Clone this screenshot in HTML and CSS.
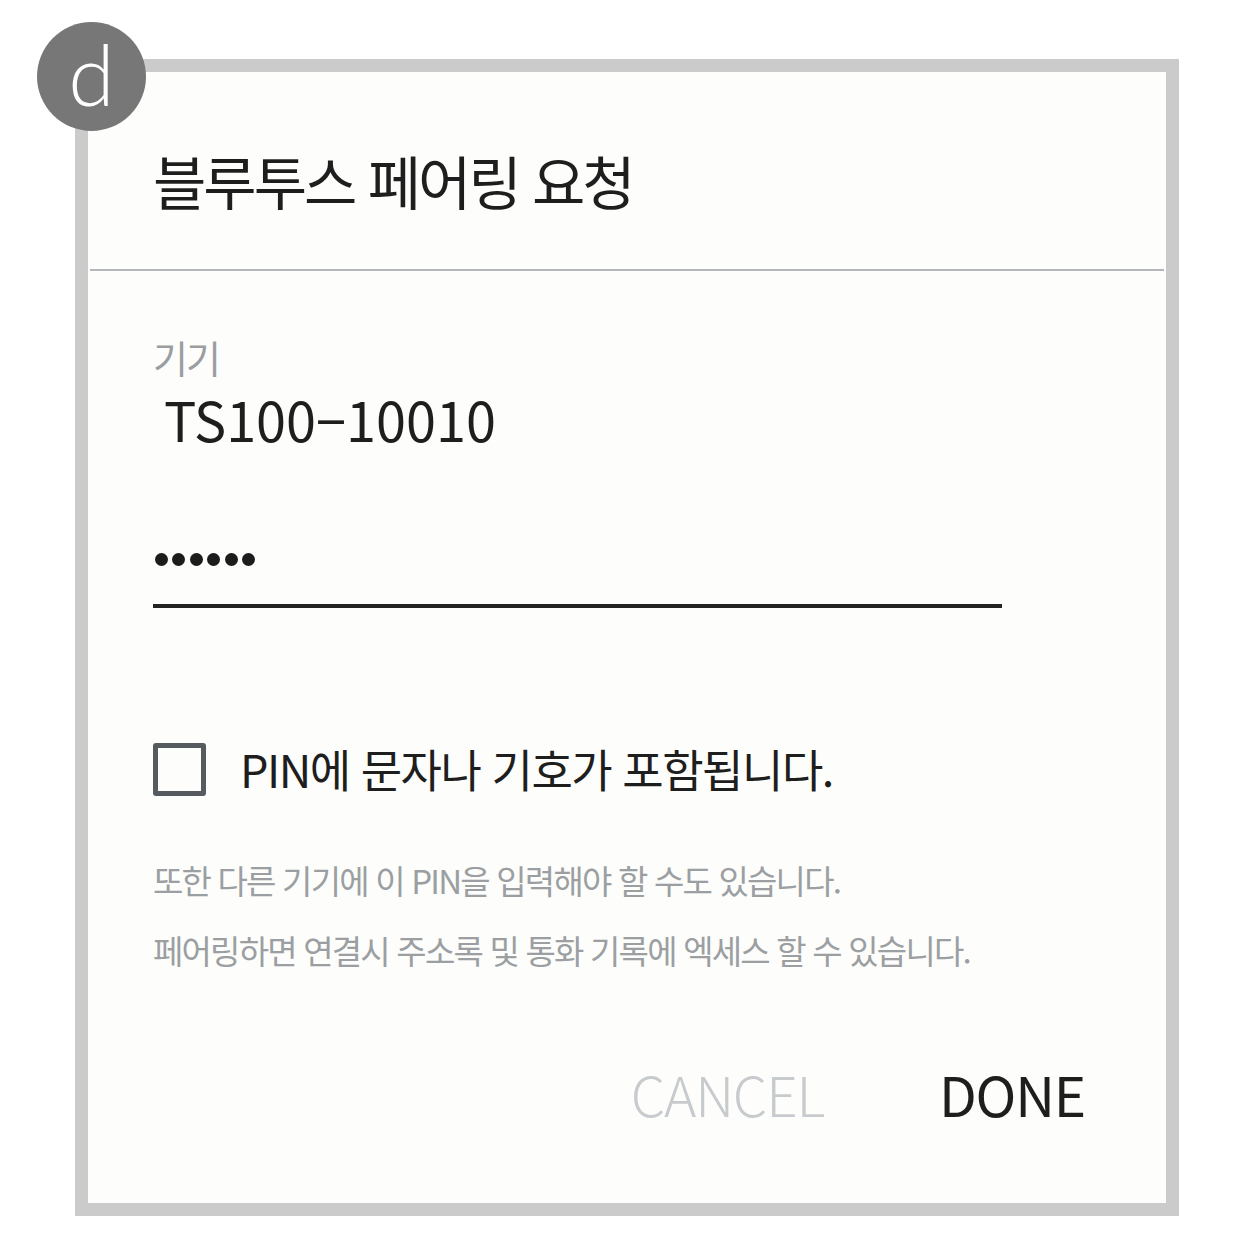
FILE: index.html
```html
<!DOCTYPE html>
<html lang="ko">
<head>
<meta charset="utf-8">
<link rel="stylesheet" href="styles.css">
</head>
<body>
<div class="stage">
  <div class="frame">
    <div class="badge">d</div>
    <div class="header">
      <h1 class="title">블루투스 페어링 요청</h1>
    </div>
    <div class="body">
      <div class="label">기기</div>
      <div class="device">TS100−10010</div>
      <div class="pin">
        <span class="dot"></span><span class="dot"></span><span class="dot"></span><span class="dot"></span><span class="dot"></span><span class="dot"></span>
      </div>
      <div class="underline"></div>
      <div class="check-row">
        <span class="checkbox"></span>
        <span class="check-label">PIN에 문자나 기호가 포함됩니다.</span>
      </div>
      <p class="note">또한 다른 기기에 이 PIN을 입력해야 할 수도 있습니다.</p>
      <p class="note">페어링하면 연결시 주소록 및 통화 기록에 엑세스 할 수 있습니다.</p>
      <div class="actions">
        <span class="btn cancel">CANCEL</span>
        <span class="btn done">DONE</span>
      </div>
    </div>
  </div>
</div>
</body>
</html>
```
FILE: styles.css
```css
html, body {
  margin: 0;
  padding: 0;
  background: #ffffff;
}
body {
  font-family: "Noto Sans CJK KR", "Noto Sans", sans-serif;
  width: 1242px;
  height: 1260px;
  overflow: hidden;
}
.stage {
  padding: 59px 0 0 75px;
}
.frame {
  position: relative;
  box-sizing: border-box;
  width: 1104px;
  height: 1157px;
  border: 13px solid #cbcbcb;
  background: #fdfdfb;
  display: flex;
  flex-direction: column;
}
.badge {
  position: absolute;
  left: -51px;
  top: -50px;
  width: 109px;
  height: 109px;
  border-radius: 50%;
  background: #777777;
  color: #ffffff;
  font-family: "Lato", "Noto Sans", sans-serif;
  font-weight: 300;
  font-size: 84px;
  line-height: 104px;
  text-align: center;
}
.header {
  height: 199px;
  margin: 0 2px;
  border-bottom: 2px solid #b4b7b9;
  box-sizing: border-box;
  padding: 68px 0 0 63px;
}
.title {
  margin: 0;
  font-size: 58px;
  font-weight: 400;
  line-height: 80px;
  letter-spacing: -3px;
  color: #1e1e1e;
}
.body {
  padding: 0 0 0 65px;
  display: flex;
  flex-direction: column;
}
.label {
  margin-top: 60px;
  font-size: 38px;
  line-height: 52px;
  color: #9a9ea1;
  letter-spacing: -2px;
}
.device {
  margin-top: 2px;
  padding-left: 11px;
  font-size: 54px;
  line-height: 68px;
  color: #1e1e1e;
  letter-spacing: 0;
}
.pin {
  margin-top: 100px;
  display: flex;
  gap: 4.4px;
  padding-left: 2px;
}
.dot {
  width: 13px;
  height: 13px;
  border-radius: 50%;
  background: #1c1c1c;
}
.underline {
  margin-top: 38px;
  width: 849px;
  height: 4px;
  background: #232323;
}
.check-row {
  margin-top: 131px;
  display: flex;
  align-items: center;
  gap: 34px;
}
.checkbox {
  box-sizing: border-box;
  width: 53px;
  height: 53px;
  border: 5px solid #555b5e;
  border-radius: 3px;
}
.check-label {
  font-size: 45px;
  line-height: 60px;
  color: #1e1e1e;
  letter-spacing: -1.5px;
}
.note {
  margin: 0;
  font-size: 33px;
  line-height: 70px;
  color: #9b9fa2;
  letter-spacing: -1.8px;
}
.note:first-of-type {
  margin-top: 46px;
}
.actions {
  margin-top: 73px;
  display: flex;
  justify-content: flex-end;
  gap: 115px;
  padding-right: 81px;
}
.btn {
  font-family: "Noto Sans CJK KR", "Noto Sans", sans-serif;
  font-size: 55px;
  line-height: 70px;
  letter-spacing: -1.2px;
}
.cancel {
  color: #c8cbcd;
  font-weight: 300;
}
.done {
  color: #1e1e1e;
  font-weight: 400;
}
```
